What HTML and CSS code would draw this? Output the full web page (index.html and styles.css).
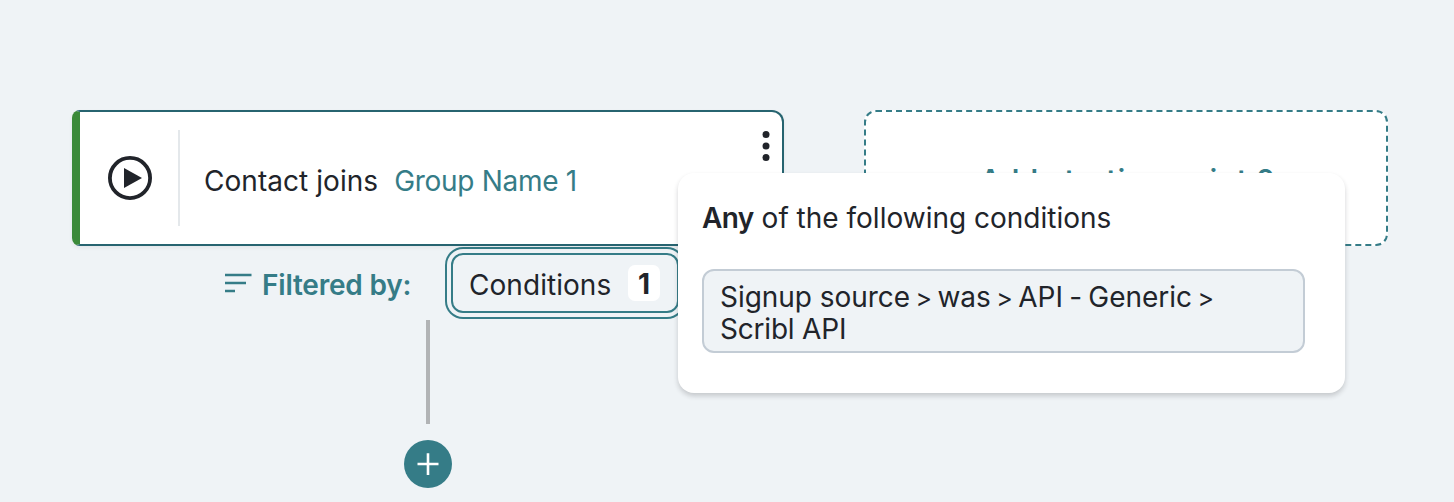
FILE: index.html
```html
<!DOCTYPE html>
<html lang="en">
<head>
<meta charset="utf-8">
<title>Journey map</title>
<link rel="stylesheet" href="styles.css">
</head>
<body>
<main class="canvas">
  <div class="starts">
    <section class="branch">
      <article class="card">
        <div class="card-icon">
          <svg width="44" height="44" viewBox="0 0 44 44"><circle cx="22" cy="22" r="20.1" fill="none" stroke="#21242a" stroke-width="3.8"/><path d="M16 12v20l18-10z" fill="#21242a"/></svg>
        </div>
        <p class="card-text"><span class="t-joins">Contact joins</span><a class="t-group">Group Name 1</a></p>
        <svg class="kebab" width="8" height="32" viewBox="0 0 8 32" fill="#21242a"><circle cx="4" cy="4.4" r="3.5"/><circle cx="4" cy="16" r="3.5"/><circle cx="4" cy="27.6" r="3.5"/></svg>
      </article>
      <div class="filter">
        <svg class="filter-icon" width="28" height="20" viewBox="0 0 28 20" fill="none" stroke="#357c87" stroke-width="2.4"><path d="M0 2h26.5M0 10h21M0 18h10"/></svg>
        <span class="t-filter">Filtered by:</span>
        <button class="conditions"><span class="t-cond">Conditions</span><span class="count">1</span></button>
      </div>
      <div class="connector"></div>
      <div class="add">
        <svg width="48" height="48" viewBox="0 0 48 48"><circle cx="24" cy="24" r="24" fill="#357c87"/><path d="M13.5 24h21M24 13.3v21.7" stroke="#fff" stroke-width="2.6"/></svg>
      </div>
    </section>
    <section class="empty"><span class="t-add">Add starting point 2</span></section>
  </div>
  <aside class="popover">
    <p class="pop-title"><b class="t-any">Any</b> <span class="t-of">of the following conditions</span></p>
    <p class="rule"><span class="t-rule">Signup source <span class="gt">&gt;</span> was <span class="gt">&gt;</span> API <span class="dash">-</span> Generic <span class="gt">&gt;</span></span><br><span class="t-scribl">Scribl API</span></p>
  </aside>
</main>
</body>
</html>
```
FILE: styles.css
```css
* { box-sizing: border-box; }
body {
  margin: 0;
  background: #eff3f6;
  color: #21242a;
  font: 400 28px/32px Inter, "Liberation Sans", sans-serif;
  font-variant-ligatures: no-contextual;
}
p { margin: 0; }
span, a, b { white-space: nowrap; }
.canvas {
  position: relative;
  height: 502px;
  overflow: hidden;
  padding: 110px 66px 0 72px;
}
.starts { display: flex; align-items: flex-start; gap: 80px; }
.branch { width: 712px; display: flex; flex-direction: column; align-items: center; }
.card {
  position: relative;
  width: 712px;
  height: 136px;
  display: flex;
  align-items: center;
  background: #fff;
  border: 2px solid #276470;
  border-left: 8px solid #3b8a3a;
  border-radius: 12px;
  border-top-left-radius: 8px;
  border-bottom-left-radius: 8px;
  box-shadow: 0 2px 4px rgba(33, 36, 42, .06);
}
.card-icon {
  width: 100px;
  height: 96px;
  padding-left: 28px;
  display: flex;
  align-items: center;
  border-right: 2px solid #e4e8eb;
}
.card-text { display: flex; padding: 5px 0 0 24px; gap: 16px; }
.t-group { color: #357c87; letter-spacing: -.3px; }
.t-joins { letter-spacing: .05px; }
.kebab { position: absolute; top: 18px; right: 12px; }
.filter {
  align-self: stretch;
  height: 74px;
  padding-left: 152.5px;
  display: flex;
  align-items: center;
}
.t-filter { margin: 3px 0 0 9.5px; width: 189px; font-weight: 600; color: #357c87; letter-spacing: -.2px; }
.conditions {
  width: 228px;
  height: 60px;
  padding: 0 17px 0 16px;
  display: flex;
  align-items: center;
  justify-content: space-between;
  font: inherit;
  color: inherit;
  background: #eff3f6;
  border: 2px solid #357c87;
  border-radius: 12px;
  box-shadow: 0 0 0 4px #eff3f6, 0 0 0 6px #357c87;
}
.t-cond { padding-top: 3px; letter-spacing: .05px; }
.count {
  width: 32px;
  height: 36px;
  padding-top: 1px;
  line-height: 36px;
  text-align: center;
  font-weight: 700;
  background: #fff;
  border-radius: 7px;
}
.connector { width: 4px; height: 104px; background: #b1b3b5; }
.add { height: 48px; margin-top: 16px; }
.add svg { display: block; }
.empty {
  flex: 1;
  height: 136px;
  padding-top: 4px;
  display: flex;
  align-items: center;
  justify-content: center;
  background: #fff;
  border: 2px dashed #357c87;
  border-radius: 12px;
  font-weight: 600;
  color: #357c87;
}
.t-add { letter-spacing: 1.4px; padding-left: 4px; }
.popover {
  position: absolute;
  left: 678px;
  top: 173px;
  width: 667px;
  height: 220px;
  padding: 29px 40px 0 24px;
  background: #fff;
  border-radius: 16px;
  box-shadow: 0 3px 5px rgba(33, 36, 42, .2);
}
.t-any { font-weight: 600; letter-spacing: -.6px; }
.rule {
  height: 84px;
  margin-top: 35px;
  padding: 10px 16px;
  background: #eff3f6;
  border: 2px solid #c3ccd5;
  border-radius: 12px;
}
.t-rule { letter-spacing: -.05px; }
.t-scribl { letter-spacing: -.2px; }
.gt { font-size: 25px; line-height: 1; margin: 0 -2.3px; }
.dash { margin: 0 -1.5px; }
```
